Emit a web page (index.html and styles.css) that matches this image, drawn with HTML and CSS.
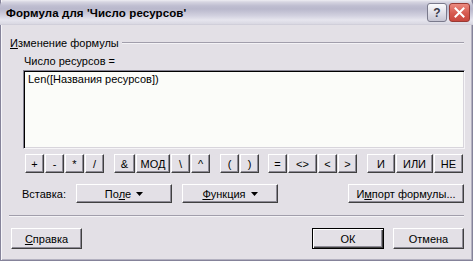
FILE: index.html
```html
<!DOCTYPE html>
<html>
<head>
<meta charset="utf-8">
<link rel="stylesheet" href="styles.css">
</head>
<body>
<div class="window">
  <div class="titlebar">
    <div class="title">Формула для 'Число ресурсов'</div>
    <div class="tb-buttons">
      <div class="tb-btn help">?</div>
      <div class="tb-btn close">
        <svg width="11" height="11" viewBox="0 0 11 11"><path d="M1.5 1.5 L9.5 9.5 M9.5 1.5 L1.5 9.5" stroke="#fff" stroke-width="2" stroke-linecap="square"/></svg>
      </div>
    </div>
  </div>
  <div class="content">
    <div class="group-head"><span><u>И</u>зменение формулы</span><div class="group-line"></div></div>
    <div class="field-label">Число ресурсов =</div>
    <div class="editor">Len([Названия ресурсов])</div>
    <div class="ops">
      <div class="grp">
        <div class="btn w19">+</div><div class="btn w19">-</div><div class="btn w19">*</div><div class="btn w19">/</div>
      </div>
      <div class="grp">
        <div class="btn w21">&amp;</div><div class="btn w34">МОД</div><div class="btn w19">\</div><div class="btn w19">^</div>
      </div>
      <div class="grp">
        <div class="btn w19">(</div><div class="btn w19">)</div>
      </div>
      <div class="grp g4">
        <div class="btn w19">=</div><div class="btn w29">&lt;&gt;</div><div class="btn w19">&lt;</div><div class="btn w19">&gt;</div>
      </div>
      <div class="grp">
        <div class="btn w28">И</div><div class="btn w37">ИЛИ</div><div class="btn w29">НЕ</div>
      </div>
    </div>
    <div class="insert">
      <div class="ins-label">Вставка:</div>
      <div class="btn wide"><span>По<u>л</u>е</span><svg class="tri" width="7" height="4" viewBox="0 0 7 4"><path d="M0 0 H7 L3.5 4 Z" fill="#000"/></svg></div>
      <div class="btn wide"><span><u>Ф</u>ункция</span><svg class="tri" width="7" height="4" viewBox="0 0 7 4"><path d="M0 0 H7 L3.5 4 Z" fill="#000"/></svg></div>
      <div class="btn import"><span>И<u>м</u>порт формулы...</span></div>
    </div>
    <div class="sep"></div>
    <div class="footer">
      <div class="btn dlg"><span><u>С</u>правка</span></div>
      <div class="right">
        <div class="btn dlg default">ОК</div>
        <div class="btn dlg">Отмена</div>
      </div>
    </div>
  </div>
</div>
</body>
</html>
```
FILE: styles.css
```css
html, body {
  margin: 0;
  padding: 0;
  background: #e3e0e6;
}
body {
  font-family: "Liberation Sans", "DejaVu Sans", sans-serif;
  font-size: 11px;
  color: #000;
}
.window {
  width: 473px;
  height: 261px;
  box-sizing: border-box;
  background: #e3e0e6;
  border: 1px solid #85839a;
  border-top: none;
  box-shadow: inset 1px 0 0 #f6f5f9, inset -1px 0 0 #b3b1c0, inset 0 -1px 0 #b3b1c0;
  display: flex;
  flex-direction: column;
}
.titlebar {
  height: 25px;
  margin: 0 -1px;
  display: flex;
  align-items: center;
  justify-content: space-between;
  padding: 0 3px 0 6px;
  background: linear-gradient(#eeeef3 0, #d6d5e1 2px, #bebdd0 6px, #b9b8cc 9px, #cfcedd 15px, #e6e5ee 20px, #d9d8e2 24px, #c8c6d2 25px);
  border-radius: 6px 6px 0 0;
}
.title {
  font-weight: bold;
  font-size: 11.5px;
  color: #000;
  letter-spacing: 0.1px;
}
.tb-buttons {
  display: flex;
  gap: 2px;
  align-items: center;
}
.tb-btn {
  height: 19px;
  box-sizing: border-box;
  border-radius: 3px;
  display: flex;
  align-items: center;
  justify-content: center;
}
.help {
  width: 20px;
  border: 1px solid #7a7a8c;
  background: linear-gradient(#fbfbfd, #dcdbe5 60%, #c6c5d3);
  color: #3a3a4a;
  font-weight: bold;
  font-size: 12px;
}
.close {
  width: 21px;
  border: 1px solid #9a3a34;
  background: linear-gradient(#ec8a80, #d65a50 55%, #c8463e);
}
.content {
  flex: 1;
  display: flex;
  flex-direction: column;
  padding: 0 8px 0 8px;
}
.group-head {
  margin-top: 11px;
  height: 13px;
  display: flex;
  align-items: center;
  gap: 3px;
  padding-left: 1px;
}
.group-line {
  flex: 1;
  height: 0;
  border-top: 1px solid #a19eab;
  border-bottom: 1px solid #f4f3f6;
}
.field-label {
  margin-top: 6px;
  height: 13px;
  line-height: 13px;
  padding-left: 15px;
}
.editor {
  margin: 2px -1px 0 14px;
  height: 79px;
  box-sizing: border-box;
  background: #fbfcf9;
  border: 1px solid;
  border-color: #858291 #f6f5f8 #f6f5f8 #858291;
  box-shadow: inset 1px 1px 0 #000, inset -1px -1px 0 #d8d5dc;
  padding: 2px 4px;
  line-height: 13px;
}
.ops {
  margin-top: 5px;
  height: 19px;
  display: flex;
  padding-left: 16px;
  gap: 10px;
}
.grp {
  display: flex;
  gap: 1px;
}
.g4 {
  margin-left: -1px;
}
.btn {
  box-sizing: border-box;
  height: 19px;
  display: flex;
  align-items: center;
  justify-content: center;
  gap: 5px;
  background: #e3e0e6;
  border: 1px solid;
  border-color: #ffffff #404040 #404040 #ffffff;
  box-shadow: inset -1px -1px 0 #8e8b96;
  white-space: nowrap;
}
.w19 { width: 19px; }
.w21 { width: 21px; }
.w28 { width: 28px; }
.w29 { width: 29px; }
.w34 { width: 34px; }
.w37 { width: 37px; }
.insert {
  margin-top: 11px;
  height: 19px;
  display: flex;
  align-items: center;
  padding-left: 13px;
}
.ins-label {
  width: 54px;
}
.wide {
  width: 96px;
  margin-right: 10px;
}
.import {
  width: 116px;
  margin-left: auto;
}
.tri {
  display: block;
}
.sep {
  margin-top: 12px;
  height: 0;
  border-top: 1px solid #a19eab;
  border-bottom: 1px solid #f4f3f6;
}
.footer {
  margin-top: 11px;
  display: flex;
  justify-content: space-between;
  padding-left: 2px;
}
.right {
  display: flex;
  gap: 9px;
}
.dlg {
  width: 71px;
  height: 21px;
}
.default {
  width: 72px;
  border-color: #000;
  box-shadow: inset 1px 1px 0 #fff, inset -1px -1px 0 #404040, inset -2px -2px 0 #8e8b96;
}
```
